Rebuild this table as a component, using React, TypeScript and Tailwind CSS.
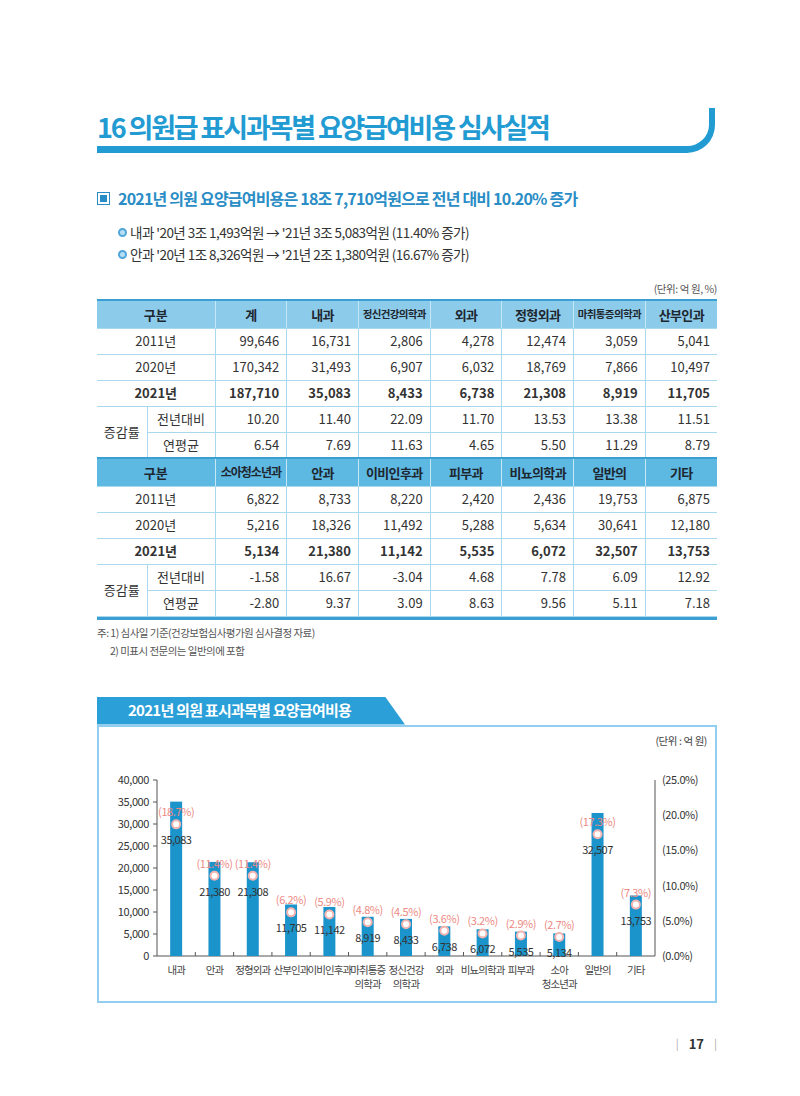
const FONT = "font-['Noto_Sans_CJK_KR','Noto_Sans',sans-serif]";

type Row = { label: string; vals: string[] };

const TOP_HEADS = ["계", "내과", "정신건강의학과", "외과", "정형외과", "마취통증의학과", "산부인과"];
const TOP_ROWS: Row[] = [
  { label: "2011년", vals: ["99,646", "16,731", "2,806", "4,278", "12,474", "3,059", "5,041"] },
  { label: "2020년", vals: ["170,342", "31,493", "6,907", "6,032", "18,769", "7,866", "10,497"] },
  { label: "2021년", vals: ["187,710", "35,083", "8,433", "6,738", "21,308", "8,919", "11,705"] },
  { label: "전년대비", vals: ["10.20", "11.40", "22.09", "11.70", "13.53", "13.38", "11.51"] },
  { label: "연평균", vals: ["6.54", "7.69", "11.63", "4.65", "5.50", "11.29", "8.79"] },
];

const BOTTOM_HEADS = ["소아청소년과", "안과", "이비인후과", "피부과", "비뇨의학과", "일반의", "기타"];
const BOTTOM_ROWS: Row[] = [
  { label: "2011년", vals: ["6,822", "8,733", "8,220", "2,420", "2,436", "19,753", "6,875"] },
  { label: "2020년", vals: ["5,216", "18,326", "11,492", "5,288", "5,634", "30,641", "12,180"] },
  { label: "2021년", vals: ["5,134", "21,380", "11,142", "5,535", "6,072", "32,507", "13,753"] },
  { label: "전년대비", vals: ["-1.58", "16.67", "-3.04", "4.68", "7.78", "6.09", "12.92"] },
  { label: "연평균", vals: ["-2.80", "9.37", "3.09", "8.63", "9.56", "5.11", "7.18"] },
];

const BARS = [
  { name: ["내과"], v: 35083, p: 18.7 },
  { name: ["안과"], v: 21380, p: 11.4 },
  { name: ["정형외과"], v: 21308, p: 11.4 },
  { name: ["산부인과"], v: 11705, p: 6.2 },
  { name: ["이비인후과"], v: 11142, p: 5.9 },
  { name: ["마취통증", "의학과"], v: 8919, p: 4.8 },
  { name: ["정신건강", "의학과"], v: 8433, p: 4.5 },
  { name: ["외과"], v: 6738, p: 3.6 },
  { name: ["비뇨의학과"], v: 6072, p: 3.2 },
  { name: ["피부과"], v: 5535, p: 2.9 },
  { name: ["소아", "청소년과"], v: 5134, p: 2.7 },
  { name: ["일반의"], v: 32507, p: 17.3 },
  { name: ["기타"], v: 13753, p: 7.3 },
];

const CELL = "border-b border-r border-[#a9d8ef] text-[13px] text-[#333]";
const NUM = "border-b border-r border-[#a9d8ef] text-right pr-[7px] text-[13px] text-[#333] last:border-r-0";

function headSize(h: string) {
  if (h.length >= 7) return "text-[10.5px] tracking-[-0.06em]";
  if (h.length === 6) return "text-[12px] tracking-[-0.08em]";
  return "text-[13px] tracking-[-0.05em]";
}

function Block({ heads, rows, headBg }: { heads: string[]; rows: Row[]; headBg: string }) {
  return (
    <>
      <tr className={`h-[28px] ${headBg}`}>
        <th colSpan={2} className="border-t-2 border-t-[#3b9fd4] border-r border-r-[#c8e7f6] border-b border-b-[#a9d8ef] text-center text-[13px] font-bold text-[#1d2730]">
          구분
        </th>
        {heads.map((h) => (
          <th
            key={h}
            className={`border-t-2 border-t-[#3b9fd4] border-r border-r-[#c8e7f6] last:border-r-0 border-b border-b-[#a9d8ef] text-center font-bold whitespace-nowrap text-[#1d2730] ${headSize(h)}`}
          >
            {h}
          </th>
        ))}
      </tr>
      {rows.slice(0, 3).map((r, i) => (
        <tr key={r.label} className={`h-[26px] ${i === 2 ? "font-bold" : ""}`}>
          <td colSpan={2} className={`${CELL} text-center`}>
            {r.label}
          </td>
          {r.vals.map((v, j) => (
            <td key={j} className={NUM}>
              {v}
            </td>
          ))}
        </tr>
      ))}
      <tr className="h-[26px]">
        <td rowSpan={2} className={`${CELL} text-center`}>
          증감률
        </td>
        <td className={`${CELL} text-center`}>{rows[3].label}</td>
        {rows[3].vals.map((v, j) => (
          <td key={j} className={NUM}>
            {v}
          </td>
        ))}
      </tr>
      <tr className="h-[26px]">
        <td className={`${CELL} text-center`}>{rows[4].label}</td>
        {rows[4].vals.map((v, j) => (
          <td key={j} className={NUM}>
            {v}
          </td>
        ))}
      </tr>
    </>
  );
}

function Chart() {
  const X0 = 157;
  const X1 = 655;
  const Y0 = 953;
  const YT = 777;
  const step = (X1 - X0) / BARS.length;
  const yv = (v: number) => Y0 - (v / 40000) * (Y0 - YT);
  const yp = (p: number) => Y0 - (p / 25) * (Y0 - YT);
  const leftTicks = [0, 5000, 10000, 15000, 20000, 25000, 30000, 35000, 40000];
  const rightTicks = [0, 5, 10, 15, 20, 25];

  return (
    <svg width="616" height="235" viewBox="99 760 616 235" className="block">
      {/* left axis */}
      <line x1={X0} y1={YT} x2={X0} y2={Y0} stroke="#555" strokeWidth="1" />
      {leftTicks.map((t) => (
        <g key={t}>
          <line x1={X0 - 4} y1={yv(t)} x2={X0} y2={yv(t)} stroke="#555" strokeWidth="1" />
          <text x={X0 - 8} y={yv(t) + 4} textAnchor="end" fontSize="11" fill="#333" letterSpacing="-0.4">
            {t === 0 ? "0" : t === 5000 ? "5,000" : t.toLocaleString("en-US")}
          </text>
        </g>
      ))}
      {/* right axis */}
      <line x1={X1} y1={YT} x2={X1} y2={Y0} stroke="#555" strokeWidth="1" />
      {rightTicks.map((t) => (
        <text key={t} x={X1 + 7} y={yp(t) + 4} fontSize="11" fill="#333" letterSpacing="-0.4">
          ({t.toFixed(1)}%)
        </text>
      ))}
      {/* x axis */}
      <line x1={X0} y1={Y0} x2={X1} y2={Y0} stroke="#555" strokeWidth="1" />
      {BARS.slice(1).map((_, i) => (
        <line key={i} x1={X0 + (i + 1) * step} y1={Y0 - 4} x2={X0 + (i + 1) * step} y2={Y0} stroke="#555" strokeWidth="1" />
      ))}
      {BARS.map((b, i) => {
        const cx = X0 + (i + 0.5) * step;
        const my = yp(b.p);
        return (
          <g key={b.name.join("")}>
            <rect x={cx - 6} y={yv(b.v)} width="12" height={Y0 - yv(b.v)} fill="#1b93cb" />
            <circle cx={cx} cy={my} r="4" fill="#fff" stroke="#f3b3b0" strokeWidth="2" />
            <text x={cx} y={my - 8} textAnchor="middle" fontSize="11" fill="#ec8a84" letterSpacing="-0.4">
              ({b.p}%)
            </text>
            <text x={cx} y={my + 20} textAnchor="middle" fontSize="11" fill="#333" letterSpacing="-0.5">
              {b.v.toLocaleString("en-US")}
            </text>
            {b.name.map((n, k) => (
              <text key={n} x={cx} y={Y0 + 18 + k * 14} textAnchor="middle" fontSize="10.5" fill="#444" letterSpacing="-0.9">
                {n}
              </text>
            ))}
          </g>
        );
      })}
    </svg>
  );
}

export default function App() {
  return (
    <div className={`w-[800px] h-[1096px] overflow-hidden bg-white pt-[108px] pl-[97px] pr-[83px] flex flex-col ${FONT}`}>
      {/* Title */}
      <div className="h-[45px] w-[618px] border-b-[7px] border-r-[6px] border-[#229bd3] rounded-br-[28px] flex items-center">
        <h1 className="text-[27px] leading-none font-bold tracking-[-0.08em] text-[#229bd3] pb-[2px]">
          16 의원급 표시과목별 요양급여비용 심사실적
        </h1>
      </div>

      {/* Summary */}
      <div className="mt-[33px] h-[24px] flex items-center gap-[8px]">
        <span className="w-[13px] h-[13px] border-[1.5px] border-[#2a8dc5] flex items-center justify-center">
          <span className="w-[7px] h-[7px] bg-[#2a8dc5]" />
        </span>
        <p className="text-[16px] font-semibold tracking-[-0.05em] text-[#2a8dc5]">
          2021년 의원 요양급여비용은 18조 7,710억원으로 전년 대비 10.20% 증가
        </p>
      </div>
      <div className="mt-[11px] ml-[21px] flex flex-col text-[13.5px] tracking-[-0.04em] text-[#333]">
        <div className="h-[22px] flex items-center gap-[3px]">
          <span className="w-[9px] h-[9px] rounded-full bg-[#b8def3] border-2 border-[#4ea6d9]" />
          <span>내과 &apos;20년 3조 1,493억원 → &apos;21년 3조 5,083억원 (11.40% 증가)</span>
        </div>
        <div className="h-[22px] flex items-center gap-[3px]">
          <span className="w-[9px] h-[9px] rounded-full bg-[#b8def3] border-2 border-[#4ea6d9]" />
          <span>안과 &apos;20년 1조 8,326억원 → &apos;21년 2조 1,380억원 (16.67% 증가)</span>
        </div>
      </div>

      {/* Table */}
      <p className="mt-[16px] h-[16px] leading-[16px] text-right text-[10.5px] tracking-[-0.04em] text-[#555]">(단위: 억 원, %)</p>
      <div className="mt-[2px] border-b-[3px] border-[#3b9fd4]">
        <table className="w-[620px] table-fixed border-collapse">
          <colgroup>
            <col className="w-[50px]" />
            <col className="w-[68px]" />
            <col />
            <col />
            <col />
            <col />
            <col />
            <col />
            <col />
          </colgroup>
          <tbody>
            <Block heads={TOP_HEADS} rows={TOP_ROWS} headBg="bg-[#8dcbea]" />
            <Block heads={BOTTOM_HEADS} rows={BOTTOM_ROWS} headBg="bg-[#5db8e2]" />
          </tbody>
        </table>
      </div>
      <div className="mt-[4px] text-[10.5px] leading-[18px] tracking-[-0.05em] text-[#555]">
        <p>주: 1) 심사일 기준(건강보험심사평가원 심사결정 자료)</p>
        <p className="pl-[13px]">2) 미표시 전문의는 일반의에 포함</p>
      </div>

      {/* Chart */}
      <div className="mt-[37px]">
        <div className="w-[308px] h-[28px] bg-[#2a9fd8] [clip-path:polygon(0_0,93.5%_0,100%_100%,0_100%)] flex items-center pl-[31px]">
          <span className="text-[15px] font-bold tracking-[-0.05em] text-white">2021년 의원 표시과목별 요양급여비용</span>
        </div>
        <div className="h-[278px] border-2 border-[#92cfee] flex flex-col">
          <p className="pt-[6px] pr-[8px] h-[22px] leading-[16px] text-right text-[10.5px] tracking-[-0.04em] text-[#444]">(단위 : 억 원)</p>
          <div className="mt-[14px]">
            <Chart />
          </div>
        </div>
      </div>

      {/* Page number */}
      <div className="mt-[33px] h-[16px] flex items-center justify-end gap-[10px] text-[13px] leading-none">
        <span className="text-[#aaa] text-[11px]">|</span>
        <span className="font-bold text-[#333]">17</span>
        <span className="text-[#aaa] text-[11px]">|</span>
      </div>
    </div>
  );
}
